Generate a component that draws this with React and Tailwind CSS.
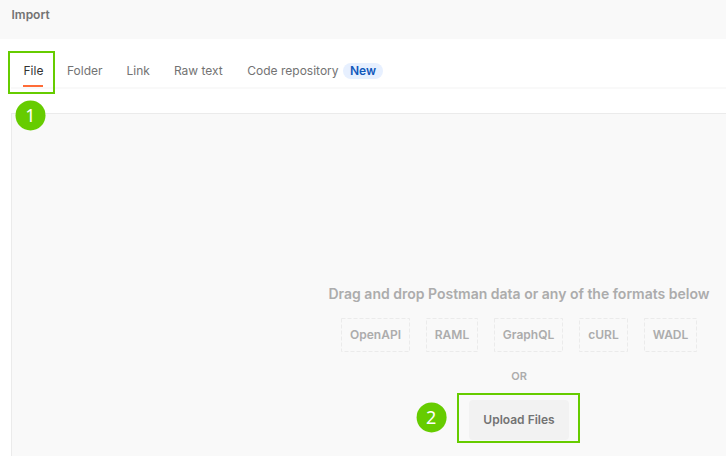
const tabs = ['Folder', 'Link', 'Raw text'];
const formats = [
  ['OpenAPI', 'w-[69px]'],
  ['RAML', 'w-[52px]'],
  ['GraphQL', 'w-[69px]'],
  ['cURL', 'w-[49px]'],
  ['WADL', 'w-[53px]'],
];

function Step({ n, className }) {
  return (
    <span
      className={`absolute flex size-[30px] items-center justify-center rounded-full bg-[#66cc00] pb-px font-['Noto_Sans',sans-serif] text-[18px] leading-none font-normal text-white ${className}`}
    >
      {n}
    </span>
  );
}

function Dashed() {
  return (
    <svg className="absolute inset-0 size-full" fill="none" stroke="#ebebeb" aria-hidden="true">
      <rect x="0.5" y="0.5" className="[height:calc(100%-1px)] [width:calc(100%-1px)]" strokeDasharray="4 2" />
    </svg>
  );
}

export default function App() {
  return (
    <div className="relative flex h-[456px] w-[726px] flex-col overflow-hidden bg-white font-['Inter',sans-serif] text-[12px] leading-4 text-[#737373]">
      <header className="h-[39px] shrink-0 bg-[#f9f9f9] pt-[7px] pl-[11.5px] font-semibold">Import</header>

      <nav className="ml-[11px] flex h-[50px] shrink-0 gap-6 border-b-2 border-[#f9f9f9] pt-6 pl-3 whitespace-nowrap">
        <div className="relative h-6 w-5 border-b-2 border-[#ff6c37] pl-[0.5px] text-[#333]">
          File
          <span className="absolute -top-3 -left-[15px] h-[43px] w-[47px] border-2 border-[#66cc00]" />
        </div>
        {tabs.map((t) => (
          <div key={t} className="first-of-type:pl-0">{t}</div>
        ))}
        <div className="flex gap-[5px]">
          <span className="translate-x-[0.5px]">Code repository</span>
          <span className="h-4 w-10 rounded-full bg-[#e7f0ff] text-center font-semibold text-[#1259bb]">New</span>
        </div>
      </nav>

      <main className="relative mt-6 ml-[11px] flex h-[343px] w-[1014px] shrink-0 flex-col items-center border-t border-l border-[#ebebeb] bg-[#f9f9f9] pt-[170px] font-semibold text-[#acacac]">
        <h1 className="pl-px text-[14px] leading-5">Drag and drop Postman data or any of the formats below</h1>
        <div className="mt-[14px] flex gap-4">
          {formats.map(([name, width]) => (
            <div key={name} className={`relative flex h-[34px] items-center justify-center pl-px ${width}`}>
              <Dashed />
              {name}
            </div>
          ))}
        </div>
        <div className="mt-4 pl-px text-[11px]">OR</div>
        <div className="relative mt-4">
          <button className="h-10 w-[100px] rounded-[4px] bg-[#f2f2f2] pl-px text-[#737373]">Upload Files</button>
          <span className="absolute -top-[7px] -left-3 h-[50px] w-[123px] border-2 border-[#66cc00]" />
          <Step n={2} className="top-[2px] -left-[53px] translate-x-[0.6px] translate-y-[0.4px]" />
        </div>
        <Step n={1} className="-top-[14px] left-[3px] translate-x-[0.5px] translate-y-[0.4px]" />
      </main>
    </div>
  );
}
